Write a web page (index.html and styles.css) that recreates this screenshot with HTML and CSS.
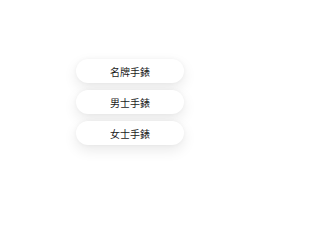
FILE: index.html
```html
<!DOCTYPE html>
<html lang="zh">
<head>
<meta charset="utf-8">
<link rel="stylesheet" href="styles.css">
</head>
<body>
<div class="menu">
  <div class="item">名牌手錶</div>
  <div class="item">男士手錶</div>
  <div class="item">女士手錶</div>
</div>
</body>
</html>
```
FILE: styles.css
```css
html, body {
  margin: 0;
  padding: 0;
  background: #ffffff;
}
body {
  width: 260px;
  height: 215px;
  font-family: "Noto Sans CJK TC", "Noto Sans CJK SC", sans-serif;
}
.menu {
  display: flex;
  flex-direction: column;
  gap: 7px;
  padding-top: 59px;
  padding-left: 76px;
  width: 108px;
}
.item {
  height: 24px;
  border-radius: 12px;
  background: #ffffff;
  box-shadow: 0 5px 14px rgba(0,0,0,0.09), 0 0 4px rgba(0,0,0,0.04);
  display: flex;
  align-items: center;
  justify-content: center;
  font-size: 10px;
  color: #1a1a1a;
}
```
